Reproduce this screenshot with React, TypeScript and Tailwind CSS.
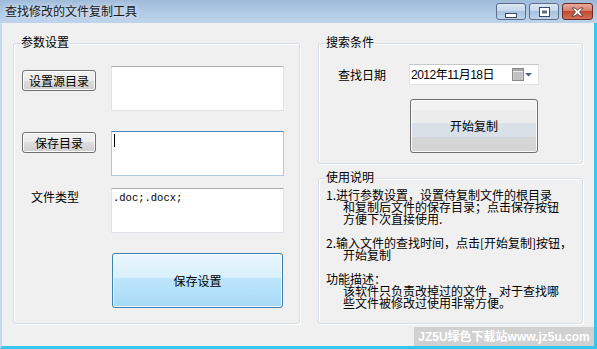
import React from "react";

const cjk = "font-['Noto_Sans_CJK_SC','Noto_Sans',sans-serif]";

function GroupBox({
  label,
  className,
  children,
}: {
  label: string;
  className: string;
  children: React.ReactNode;
}) {
  return (
    <div
      className={`relative rounded-[3px] border border-[#d5dfe5] shadow-[inset_1px_1px_0_#ffffff,1px_1px_0_#ffffff] ${className}`}
    >
      <span className="absolute -top-[9px] left-[6px] bg-[#f0f0f0] px-px text-[12px] leading-[14px]">
        {label}
      </span>
      {children}
    </div>
  );
}

function WinButton({ children, className }: { children: React.ReactNode; className: string }) {
  return (
    <button
      className={`flex h-[21px] w-[74px] items-center justify-center rounded-[3px] border border-[#707070] bg-[linear-gradient(#f2f2f2_0%,#ebebeb_50%,#dddddd_50%,#cfcfcf_100%)] text-[12px] leading-none shadow-[inset_0_0_0_1px_#fcfcfc] ${className}`}
    >
      {children}
    </button>
  );
}

function TextBox({ focused, children }: { focused?: boolean; children?: React.ReactNode }) {
  return (
    <div
      className={`h-[45px] w-[173px] border bg-white ${
        focused
          ? "border-[#a9c9e6] border-t-[#4a85bd]"
          : "border-[#e2e3ea] border-t-[#abadb3]"
      }`}
    >
      {children}
    </div>
  );
}

function CalendarIcon() {
  return (
    <svg width="22" height="14" viewBox="0 0 22 14">
      <rect x="0.5" y="0.5" width="11" height="12" fill="#e8e8e8" stroke="#8a8a8a" />
      <rect x="1" y="1" width="10" height="2" fill="#a8a8a8" />
      {[3, 5, 7, 9].map((x) => (
        <line key={"v" + x} x1={x} y1="4" x2={x} y2="12" stroke="#b5b5b5" />
      ))}
      {[5, 7, 9, 11].map((y) => (
        <line key={"h" + y} x1="1" y1={y} x2="11" y2={y} stroke="#b5b5b5" />
      ))}
      <path d="M13 5 H20 L16.5 8.5 Z" fill="#4d6185" />
    </svg>
  );
}

export default function App() {
  return (
    <div
      className={`relative flex h-[349px] w-[597px] flex-col overflow-hidden bg-[#f0f0f0] text-[12px] text-black ${cjk}`}
    >
      {/* title bar */}
      <div className="flex h-[23px] shrink-0 items-start justify-between bg-[linear-gradient(#9fbbda,#bed4ec)] pl-[5px] pr-[4px]">
        <span className="mt-[4px] text-[12px] leading-[14px] text-[#1a1a1a] [text-shadow:0_0_6px_#ffffff]">
          查找修改的文件复制工具
        </span>
        <div className="mt-[3px] flex gap-[3px]">
          <div className="flex h-[17px] w-[30px] items-center justify-center rounded-[3px] border border-[#5b6f8c] bg-[linear-gradient(#dbe7f4_0%,#c4d6ec_50%,#a9c2e1_50%,#bed3ec_100%)]">
            <svg width="12" height="12" viewBox="0 0 12 12">
              <rect x="0.5" y="7.5" width="11" height="4" fill="#ffffff" stroke="#3a4a60" />
            </svg>
          </div>
          <div className="flex h-[17px] w-[30px] items-center justify-center rounded-[3px] border border-[#5b6f8c] bg-[linear-gradient(#dbe7f4_0%,#c4d6ec_50%,#a9c2e1_50%,#bed3ec_100%)]">
            <svg width="11" height="10" viewBox="0 0 11 10">
              <rect x="0.5" y="0.5" width="10" height="9" fill="#ffffff" stroke="#3a4a60" />
              <rect x="3" y="3.5" width="5" height="3" fill="#5a6a80" />
            </svg>
          </div>
          <div className="flex h-[17px] w-[31px] items-center justify-center rounded-[3px] border border-[#6b2a22] bg-[linear-gradient(#e9a99b_0%,#d47a66_50%,#c24a32_50%,#d3705a_100%)]">
            <svg width="13" height="10" viewBox="0 0 13 10">
              <path
                d="M1 1 L4 1 L6.5 3.3 L9 1 L12 1 L8.5 5 L12 9 L9 9 L6.5 6.7 L4 9 L1 9 L4.5 5 Z"
                fill="#ffffff"
                stroke="#4a2a26"
                strokeWidth="0.8"
              />
            </svg>
          </div>
        </div>
      </div>

      {/* client area */}
      <div className="flex flex-1 gap-[18px] border-b-[3px] border-l-2 border-r-[3px] border-b-[#34c6ee] border-l-[#c3d8ee] border-r-[#34c6ee] pl-[11px] pt-[20px]">
        <GroupBox label="参数设置" className="h-[281px] w-[287px] pl-[8px] pt-[22px]">
          <div className="flex items-start">
            <WinButton className="mt-[4px]">设置源目录</WinButton>
            <div className="ml-[15px]">
              <TextBox />
            </div>
          </div>
          <div className="mt-[20px] flex items-start">
            <WinButton className="mt-[1px]">保存目录</WinButton>
            <div className="ml-[15px]">
              <TextBox focused>
                <div className="ml-[2px] mt-[2px] h-[13px] w-px bg-black" />
              </TextBox>
            </div>
          </div>
          <div className="mt-[12px] flex items-start">
            <span className="mt-[2px] w-[74px] pl-[9px] leading-[14px]">文件类型</span>
            <div className="ml-[15px]">
              <TextBox>
                <div className="pl-[1px] pt-[2px] font-['Liberation_Mono',monospace] text-[10.5px] leading-[14px]">
                  .doc;.docx;
                </div>
              </TextBox>
            </div>
          </div>
          <button className="ml-[90px] mt-[20px] flex h-[55px] w-[171px] items-center justify-center rounded-[3px] border border-[#3c7fb1] bg-[linear-gradient(#eaf6fd_0%,#d9f0fc_45%,#bee6fd_45%,#a7d9f5_100%)] text-[12px] shadow-[inset_0_0_0_1px_#f2fafe]">
            保存设置
          </button>
        </GroupBox>

        <div className="flex w-[265px] flex-col gap-[14px]">
          <GroupBox label="搜索条件" className="h-[121px] pl-[19px] pt-[20px]">
            <div className="flex h-[21px] items-center">
              <span className="w-[71px] leading-[14px]">查找日期</span>
              <div className="flex h-[21px] w-[130px] items-center justify-between border border-[#e2e3ea] border-t-[#c5c7cc] bg-white pl-px pr-[4px]">
                <span className="font-['Liberation_Sans','Noto_Sans_CJK_SC',sans-serif] text-[12px] leading-none tracking-[-0.5px]">
                  2012年11月18日
                </span>
                <CalendarIcon />
              </div>
            </div>
            <button className="ml-[72px] mt-[14px] flex h-[54px] w-[128px] items-center justify-center rounded-[3px] border border-[#707070] bg-[linear-gradient(#f3f3f3_0%,#f3f3f3_20%,#ececec_20%,#ececec_45%,#d9e0e7_45%,#d9e0e7_72%,#d5d5d5_72%,#d5d5d5_100%)] text-[12px] shadow-[inset_0_0_0_1px_#fafafa]">
              开始复制
            </button>
          </GroupBox>

          <GroupBox label="使用说明" className="h-[146px] pl-[7px] pt-[10px]">
            <div className="text-[12px] leading-[12px]">
              <div>1.进行参数设置，设置待复制文件的根目录</div>
              <div className="pl-[17px]">和复制后文件的保存目录；点击保存按钮</div>
              <div className="pl-[17px]">方便下次直接使用.</div>
              <div className="h-[12px]" />
              <div>2.输入文件的查找时间，点击[开始复制]按钮，</div>
              <div className="pl-[17px]">开始复制</div>
              <div className="h-[12px]" />
              <div>功能描述：</div>
              <div className="pl-[17px]">该软件只负责改掉过的文件，对于查找哪</div>
              <div className="pl-[17px]">些文件被修改过使用非常方便。</div>
            </div>
          </GroupBox>
        </div>
      </div>

      {/* watermark overlay */}
      <div className="absolute bottom-[3px] right-[3px] flex h-[19px] w-[180px] items-center justify-center bg-[#cfcfcf]/95 font-['Liberation_Sans','Noto_Sans_CJK_SC',sans-serif] text-[12px] font-bold leading-none text-white">
        JZ5U绿色下载站www.jz5u.com
      </div>
    </div>
  );
}
